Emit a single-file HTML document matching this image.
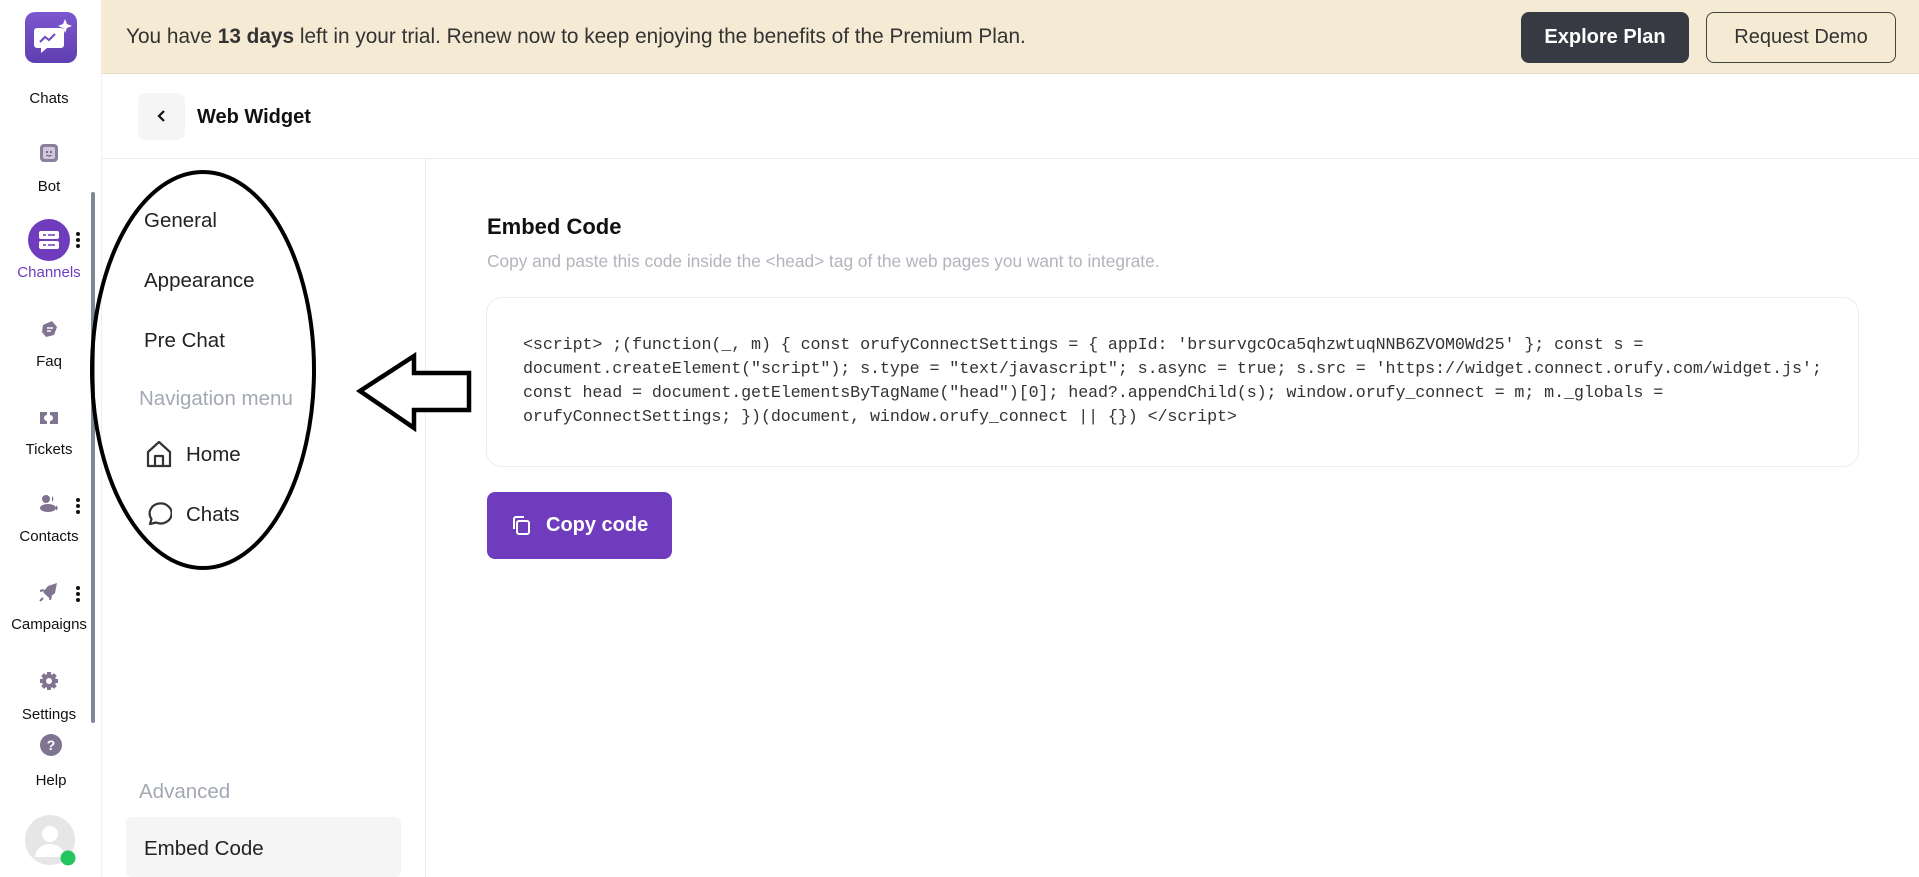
<!DOCTYPE html>
<html><head><meta charset="utf-8"><style>
*{margin:0;padding:0;box-sizing:border-box}
body{width:1919px;height:877px;overflow:hidden;background:#fff;font-family:"Liberation Sans",sans-serif;color:#222;position:relative}
.a{position:absolute}
.lbl{position:absolute;width:98px;text-align:center;font-size:15px;color:#111}
.dots{position:absolute;left:76px;width:4px}
.dots i{display:block;width:4px;height:4px;border-radius:50%;background:#111;margin-bottom:2px}
.nav{position:absolute;left:144px;font-size:20.5px;color:#222}
.code{position:absolute;left:523px;font-family:"Liberation Mono",monospace;font-size:16.7px;color:#333;white-space:pre;line-height:24px;letter-spacing:-0.1px}
</style></head><body>
<div class="a" style="left:25px;top:12px;width:52px;height:51px;border-radius:10px;background:linear-gradient(180deg,#7c57cf,#5f3fb0)"></div>
<svg class="a" style="left:25px;top:12px" width="52" height="51" viewBox="0 0 52 51"><path d="M12 16h24a3 3 0 0 1 3 3v14a3 3 0 0 1-3 3H22l-6 5v-5h-4a3 3 0 0 1-3-3V19a3 3 0 0 1 3-3z" fill="#fff"/><path d="M15 30l5-5 4 3 6-6" stroke="#6a48c0" stroke-width="2" fill="none"/><path d="M40 7l2 5 5 2-5 2-2 5-2-5-5-2 5-2z" fill="#fff"/></svg>
<div class="lbl" style="top:90px">Chats</div>
<svg class="a" style="left:39px;top:143px" width="20" height="20"><rect x="1" y="1" width="18" height="18" rx="4" fill="#8a7f9c"/><rect x="4" y="4" width="12" height="12" rx="2" fill="#cfc8da"/><circle cx="8" cy="9" r="1" fill="#5a4f6c"/><circle cx="12" cy="9" r="1" fill="#5a4f6c"/><path d="M7.5 12q2.5 2 5 0" stroke="#5a4f6c" fill="none"/></svg>
<div class="lbl" style="top:178px">Bot</div>
<div class="a" style="left:28px;top:219px;width:42px;height:42px;border-radius:50%;background:#6f3cbd"></div>
<svg class="a" style="left:39px;top:230px" width="20" height="20"><rect x="0" y="1" width="20" height="8" rx="2" fill="#fff"/><rect x="0" y="11" width="20" height="8" rx="2" fill="#fff"/><path d="M4 5h3M9 5h7M4 15h3M9 15h7" stroke="#6f3cbd" stroke-width="1.5"/></svg>
<div class="dots" style="top:232px"><i></i><i></i><i></i></div>
<div class="lbl" style="top:264px;color:#6f3cbd">Channels</div>
<div class="a" style="left:91px;top:192px;width:4px;height:531px;background:#7a8898;border-radius:2px"></div>
<svg class="a" style="left:39px;top:319px" width="20" height="20"><path d="M4 6l9-4 5 6-3 8-8 2-4-5z" fill="#807590"/><path d="M8 9h6M8 12h4" stroke="#fff" stroke-width="1.5"/></svg>
<div class="lbl" style="top:353px">Faq</div>
<svg class="a" style="left:39px;top:408px" width="20" height="20"><path d="M1 4h7v3a3 3 0 0 0 0 6v3H1zM11 4h8v12h-8v-3a3 3 0 0 0 0-6z" fill="#807590"/></svg>
<div class="lbl" style="top:441px">Tickets</div>
<svg class="a" style="left:39px;top:494px" width="20" height="20"><circle cx="7" cy="5" r="4" fill="#807590"/><ellipse cx="9" cy="14" rx="8" ry="4" fill="#807590"/><path d="M13 2a4 4 0 0 1 0 6M17 11l2 3-2 3" fill="#807590"/></svg>
<div class="dots" style="top:498px"><i></i><i></i><i></i></div>
<div class="lbl" style="top:528px">Contacts</div>
<svg class="a" style="left:39px;top:582px" width="20" height="20"><path d="M18 1l-9 3-5 6 6 6 6-5z" fill="#807590"/><path d="M1 9l4-1M4 16l-3 3M11 18l1-4" stroke="#807590" stroke-width="2"/></svg>
<div class="dots" style="top:586px"><i></i><i></i><i></i></div>
<div class="lbl" style="top:616px">Campaigns</div>
<svg class="a" style="left:39px;top:671px" width="20" height="20"><circle cx="10" cy="10" r="7" fill="#807590"/><path d="M10 1v18M1 10h18M3.6 3.6l12.8 12.8M16.4 3.6L3.6 16.4" stroke="#807590" stroke-width="4"/><circle cx="10" cy="10" r="3" fill="#fff"/></svg>
<div class="lbl" style="top:706px">Settings</div>
<svg class="a" style="left:40px;top:734px" width="22" height="22"><circle cx="11" cy="11" r="11" fill="#807590"/><text x="11" y="16" font-size="14" font-weight="bold" text-anchor="middle" fill="#fff" font-family="Liberation Sans">?</text></svg>
<div class="lbl" style="top:772px;left:2px">Help</div>
<svg class="a" style="left:25px;top:815px" width="52" height="52"><circle cx="25" cy="25" r="25" fill="#e6e6e6"/><circle cx="25" cy="19" r="8" fill="#fff"/><path d="M10 42a15 13 0 0 1 30 0z" fill="#fff"/><circle cx="43" cy="43" r="7.5" fill="#22c55e"/></svg>
<div class="a" style="left:101px;top:0;width:1818px;height:74px;background:#f5ead4;border-bottom:1px solid #e8dcc2"></div>
<div class="a" style="left:126px;top:25px;font-size:20.8px;color:#333">You have <b>13 days</b> left in your trial. Renew now to keep enjoying the benefits of the Premium Plan.</div>
<div class="a" style="left:1521px;top:12px;width:168px;height:51px;border-radius:8px;background:#373943;color:#fff;font-size:20px;font-weight:bold;text-align:center;line-height:51px">Explore Plan</div>
<div class="a" style="left:1706px;top:12px;width:190px;height:51px;border-radius:8px;border:1px solid #444;color:#333;font-size:20px;text-align:center;line-height:49px">Request Demo</div>
<div class="a" style="left:138px;top:93px;width:47px;height:47px;border-radius:8px;background:#f5f5f6"></div>
<svg class="a" style="left:154px;top:108px" width="16" height="16"><path d="M10 3L5 8l5 5" stroke="#111" stroke-width="2.2" fill="none"/></svg>
<div class="a" style="left:197px;top:106px;font-size:20px;font-weight:bold;color:#111">Web Widget</div>
<div class="a" style="left:101px;top:158px;width:1818px;height:1px;background:#ebebeb"></div>
<div class="a" style="left:425px;top:159px;width:1px;height:718px;background:#ebebeb"></div>
<div class="a" style="left:101px;top:74px;width:1px;height:803px;background:#f0f0f0"></div>
<div class="nav" style="top:209px">General</div>
<div class="nav" style="top:269px">Appearance</div>
<div class="nav" style="top:329px">Pre Chat</div>
<div class="nav" style="top:387px;left:139px;color:#a3a8b4">Navigation menu</div>
<svg class="a" style="left:146px;top:440px" width="26" height="28"><path d="M2 12L13 2l11 10v14H2z M9 26V16h8v10" stroke="#333" stroke-width="2.2" fill="none" stroke-linejoin="round"/></svg>
<div class="nav" style="top:443px;left:186px">Home</div>
<svg class="a" style="left:146px;top:500px" width="26" height="26"><path d="M4 24l1.5-5A11 10 0 1 1 10 22.5z" stroke="#333" stroke-width="2.2" fill="none" stroke-linejoin="round"/></svg>
<div class="nav" style="top:503px;left:186px">Chats</div>
<div class="nav" style="top:780px;left:139px;color:#a3a8b4">Advanced</div>
<div class="a" style="left:126px;top:817px;width:275px;height:60px;border-radius:6px;background:#f5f5f5"></div>
<div class="nav" style="top:837px">Embed Code</div>
<svg class="a" style="left:0;top:0" width="480" height="600"><ellipse cx="203" cy="370" rx="111" ry="198" stroke="#000" stroke-width="4" fill="none"/><path d="M360 391L414 356V373H469V410H414V428Z" stroke="#000" stroke-width="4.5" fill="#fff" stroke-linejoin="miter"/></svg>
<div class="a" style="left:487px;top:214px;font-size:22px;font-weight:bold;color:#111">Embed Code</div>
<div class="a" style="left:487px;top:251px;font-size:17.3px;color:#b3b3bb">Copy and paste this code inside the &lt;head&gt; tag of the web pages you want to integrate.</div>
<div class="a" style="left:486px;top:297px;width:1373px;height:170px;border:1px solid #ececec;border-radius:16px"></div>
<div class="code" style="top:334px">&lt;script&gt; ;(function(_, m) { const orufyConnectSettings = { appId: 'brsurvgcOca5qhzwtuqNNB6ZVOM0Wd25' }; const s =
document.createElement("script"); s.type = "text/javascript"; s.async = true; s.src = 'https://widget.connect.orufy.com/widget.js';
const head = document.getElementsByTagName("head")[0]; head?.appendChild(s); window.orufy_connect = m; m._globals =
orufyConnectSettings; })(document, window.orufy_connect || {}) &lt;/script&gt;</div>
<div class="a" style="left:487px;top:492px;width:185px;height:67px;border-radius:8px;background:#6f3cbd"></div>
<svg class="a" style="left:511px;top:515px" width="22" height="22"><rect x="6" y="6" width="12" height="13" rx="2" stroke="#fff" stroke-width="2" fill="none"/><path d="M3 14V4a2 2 0 0 1 2-2h8" stroke="#fff" stroke-width="2" fill="none"/></svg>
<div class="a" style="left:546px;top:514px;font-size:20px;font-weight:bold;color:#fff">Copy code</div>
</body></html>
